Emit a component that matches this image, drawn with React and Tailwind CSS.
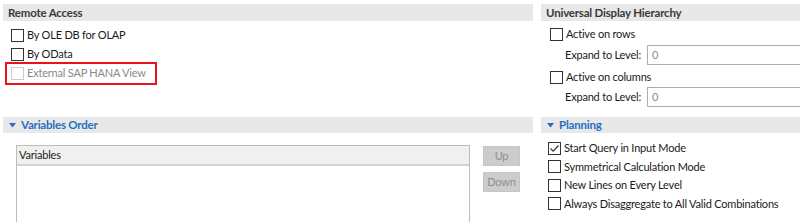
import React from 'react'

export default function App() {
  return (
    <div className="h-[222px] w-[800px] overflow-hidden whitespace-nowrap bg-white pl-[3px] pt-[4px] text-[11px] tracking-[-0.2px] text-[#1a1a1a] [font-family:Lato,'Liberation_Sans',sans-serif]">
      {/* ================= TOP ================= */}
      <div className="flex h-[113px] gap-[8px]">
        <div className="w-[530px] shrink-0">
          <SectionHeader title="Remote Access" />
          <div className="pl-[8px] pt-[5px]">
            <Check label="By OLE DB for OLAP" />
            <Check label="By OData" />
            <div className="-ml-[6px] -mt-[2px] w-[152px] border-2 border-[#e8141c] pl-[4px]">
              <Check label="External SAP HANA View" disabled />
            </div>
          </div>
        </div>
        <div className="min-w-0 flex-1">
          <SectionHeader title="Universal Display Hierarchy" />
          <div className="pl-[9px] pt-[4px]">
            <Check label="Active on rows" />
            <LevelInput />
            <Check label="Active on columns" className="mt-[3px]" />
            <LevelInput tight />
          </div>
        </div>
      </div>

      {/* ================= BOTTOM ================= */}
      <div className="flex gap-[8px]">
        <div className="w-[530px] shrink-0">
          <SectionHeader title="Variables Order" expandable />
          <div className="flex gap-[13px] pl-[13px] pt-[12px]">
            <div className="h-[80px] w-[454px] border border-b-0 border-[#bdbdbd]">
              <div className="flex h-[20px] items-center border-b-2 border-[#d2d2d2] bg-[#f0f0f0] pl-[2px]">
                Variables
              </div>
            </div>
            <div className="flex flex-col gap-[6px] pt-[1px]">
              <SideBtn>Up</SideBtn>
              <SideBtn>Down</SideBtn>
            </div>
          </div>
        </div>
        <div className="min-w-0 flex-1">
          <SectionHeader title="Planning" expandable />
          <div className="pl-[7px] pt-[6px]">
            <Check label="Start Query in Input Mode" checked tight />
            <Check label="Symmetrical Calculation Mode" tight />
            <Check label="New Lines on Every Level" tight />
            <Check label="Always Disaggregate to All Valid Combinations" tight />
          </div>
        </div>
      </div>
    </div>
  )
}

/* ================= UI HELPERS ================= */
const SectionHeader = ({ title, expandable }) => (
  <div
    className={`flex items-center bg-[#e8e8e8] text-[11.5px] font-bold ${
      expandable ? 'h-[16px] pl-[6px] text-[#1f6fc4]' : 'h-[17px] pl-[5px] text-[#3a3a3a]'
    }`}
  >
    {expandable && (
      <svg width="7" height="5" viewBox="0 0 7 5" className="mr-[5px]">
        <path d="M0 0 L7 0 L3.5 4.5 Z" fill="#1f6fc4" />
      </svg>
    )}
    {title}
  </div>
)

const Check = ({ label, checked, disabled, tight, className = '' }) => (
  <div className={`flex items-center ${tight ? 'h-[18.5px]' : 'h-[19px]'} ${className}`}>
    <span
      className={`mr-[3px] flex h-[13px] w-[13px] shrink-0 items-center justify-center border bg-white ${
        disabled ? 'border-[#cccccc]' : 'border-[#333333]'
      }`}
    >
      {checked && (
        <svg width="11" height="11" viewBox="0 0 11 11">
          <path d="M1.5 5.5 L4.2 8.2 L9.5 2.5" fill="none" stroke="#333" strokeWidth="1.2" />
        </svg>
      )}
    </span>
    <span className={disabled ? 'text-[#8a8a8a]' : ''}>{label}</span>
  </div>
)

const LevelInput = ({ tight }) => (
  <div className={`flex items-center pl-[15px] ${tight ? '' : 'mt-[1px]'}`}>
    <span className="w-[82px] shrink-0">Expand to Level:</span>
    <div className="flex h-[20px] flex-1 items-center border border-r-0 border-[#adadad] pl-[4px] text-[#8a8a8a]">
      0
    </div>
  </div>
)

const SideBtn = ({ children }) => (
  <div className="flex h-[20px] w-[37px] items-center justify-center border border-[#c6c6c6] bg-[#cccccc] text-[#8f8f8f]">
    {children}
  </div>
)
